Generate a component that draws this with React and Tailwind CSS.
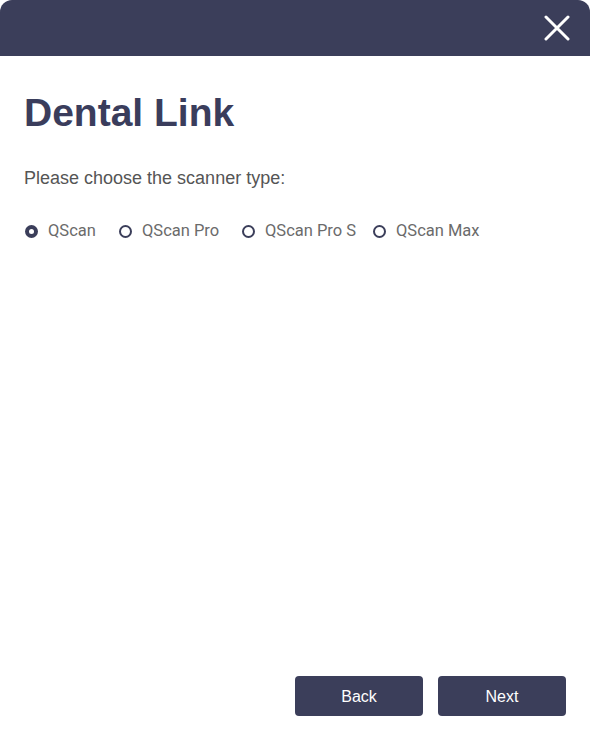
import React, { useState } from 'react';

const scanners = [
  { name: 'QScan', width: 'w-[94px]' },
  { name: 'QScan Pro', width: 'w-[123px]' },
  { name: 'QScan Pro S', width: 'w-[131px]' },
  { name: 'QScan Max', width: 'w-auto' },
];

function Radio({ checked }) {
  return checked ? (
    <span className="flex h-[13px] w-[13px] shrink-0 items-center justify-center rounded-full bg-[#3b3e5a]">
      <span className="h-[5px] w-[5px] rounded-full bg-white" />
    </span>
  ) : (
    <span className="h-[13px] w-[13px] shrink-0 rounded-full border-2 border-[#3b3e5a] bg-white" />
  );
}

export default function App() {
  const [selected, setSelected] = useState('QScan');

  return (
    <div className="flex h-[740px] w-[590px] flex-col bg-white font-['Liberation_Sans',Arial,sans-serif]">
      <div className="flex h-[56px] shrink-0 items-center justify-end rounded-t-[12px] bg-[#3b3e5a] pr-[20px]">
        <button className="flex h-[26px] w-[26px] items-center justify-center">
          <svg width="26" height="26" viewBox="0 0 26 26" fill="none">
            <path d="M2 2L24 24M24 2L2 24" stroke="white" strokeWidth="3" strokeLinecap="round" />
          </svg>
        </button>
      </div>

      <div className="flex flex-1 flex-col px-6">
        <h1 className="mt-[34px] text-[39px] font-bold leading-[46px] text-[#3a3d5c]">Dental Link</h1>
        <p className="mt-[31px] text-[18px] leading-[22px] text-[#555]">Please choose the scanner type:</p>

        <div className="mt-[32px] ml-px flex items-center">
          {scanners.map((s) => (
            <label
              key={s.name}
              onClick={() => setSelected(s.name)}
              className={`${s.width} flex shrink-0 cursor-pointer items-center gap-[10px] font-['Roboto',sans-serif] text-[16.5px] leading-[20px] text-[#6b6b6b]`}
            >
              <Radio checked={selected === s.name} />
              <span>{s.name}</span>
            </label>
          ))}
        </div>

        <div className="mt-auto mb-6 flex justify-end gap-[15px]">
          <button className="h-[40px] w-[128px] rounded-[4px] bg-[#3b3e5a] pt-px text-[16px] text-white">Back</button>
          <button className="h-[40px] w-[128px] rounded-[4px] bg-[#3b3e5a] pt-px text-[16px] text-white">Next</button>
        </div>
      </div>
    </div>
  );
}
